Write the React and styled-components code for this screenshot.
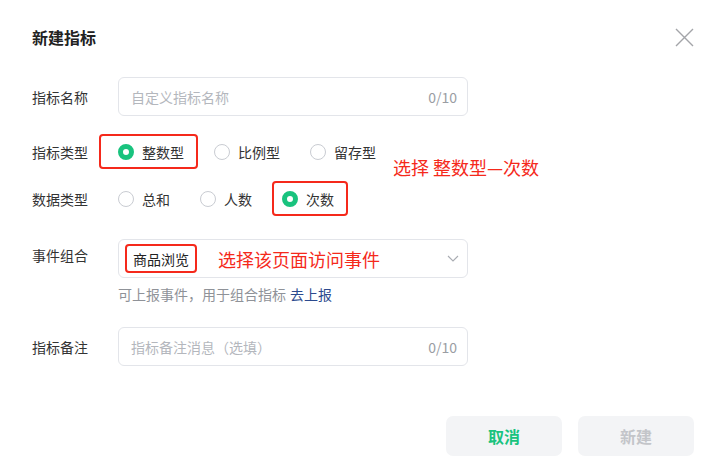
import React from 'react';
import styled, { createGlobalStyle } from 'styled-components';

const GlobalStyle = createGlobalStyle`
  html, body {
    margin: 0;
    padding: 0;
    background: #ffffff;
  }

  body {
    font-family: "Noto Sans CJK SC", "Noto Sans", sans-serif;
    color: #333333;
  }
`;

const ANNOT = '#f5291b';
const GREEN = '#19c37e';

const Dialog = styled.div`
  position: relative;
  box-sizing: border-box;
  width: 719px;
  height: 476px;
  padding: 26px 25px 20px 32px;
`;

const Header = styled.div`
  display: flex;
  justify-content: space-between;
  align-items: center;
  height: 22px;
`;

const Title = styled.h2`
  margin: 0;
  font-size: 16px;
  font-weight: 700;
  line-height: 22px;
  color: #222222;
`;

const Close = styled.button`
  display: flex;
  padding: 0;
  border: none;
  background: none;
  cursor: pointer;
`;

const Form = styled.div`
  display: flex;
  flex-direction: column;
  margin-top: 29px;
`;

const Item = styled.div`
  display: flex;
  align-items: ${props => props.top ? 'flex-start' : 'center'};
  margin-top: ${props => props.gap || 0}px;
`;

const Label = styled.span`
  flex: 0 0 86px;
  font-size: 14px;
  line-height: 20px;
  color: #333333;
  padding-top: ${props => props.offset || 0}px;
`;

const Field = styled.div`
  box-sizing: border-box;
  display: flex;
  align-items: center;
  justify-content: space-between;
  width: 350px;
  height: 39px;
  padding: ${props => props.select ? '0 8px 0 6px' : '0 10px 0 12px'};
  border: 1px solid #e3e5ea;
  border-radius: 6px;
  background: #ffffff;
  font-size: 14px;
`;

const Placeholder = styled.span`
  color: #b4b7bd;
`;

const Counter = styled.span`
  color: #9a9da3;
`;

const RadioGroup = styled.div`
  display: flex;
  gap: 30px;
`;

const Option = styled.label`
  position: relative;
  display: flex;
  align-items: center;
  gap: 8px;
  height: 35px;
  font-size: 14px;
  color: #333333;

  &::before {
    content: '';
    display: ${props => props.mark ? 'block' : 'none'};
    position: absolute;
    top: 0;
    bottom: 0;
    left: ${props => props.mark ? -props.mark[0] : 0}px;
    right: ${props => props.mark ? -props.mark[1] : 0}px;
    border: 2px solid ${ANNOT};
    border-radius: 4px;
  }
`;

const Dot = styled.span`
  box-sizing: border-box;
  width: 16px;
  height: 16px;
  border-radius: 50%;
  border: ${props => props.checked ? `5px solid ${GREEN}` : '1px solid #c9ccd2'};
  background: #ffffff;
`;

const Note = styled.span`
  color: ${ANNOT};
  font-size: ${props => props.size}px;
  line-height: 24px;
  white-space: nowrap;
`;

const FloatingNote = styled(Note)`
  position: absolute;
  left: 393px;
  top: 155px;
`;

const SelectValue = styled.div`
  display: flex;
  align-items: center;
  gap: 21px;
`;

const Tag = styled.span`
  box-sizing: border-box;
  display: flex;
  align-items: center;
  height: 29px;
  padding: 0 6px;
  border: 2px solid ${ANNOT};
  border-radius: 4px;
  font-size: 14px;
  color: #222222;
`;

const Help = styled.div`
  margin: 6px 0 0 86px;
  font-size: 14px;
  line-height: 20px;
  color: #8f9298;
`;

const Link = styled.a`
  color: #2c4a8e;
  text-decoration: none;
  margin-left: 4px;
`;

const Footer = styled.div`
  display: flex;
  justify-content: flex-end;
  gap: 16px;
  margin-top: 50px;
`;

const Button = styled.button`
  width: 116px;
  height: 40px;
  border: none;
  border-radius: 7px;
  background: #f3f4f6;
  font-family: inherit;
  font-size: 16px;
  font-weight: 700;
  color: ${props => props.disabled ? '#c3c5c9' : GREEN};
  cursor: ${props => props.disabled ? 'default' : 'pointer'};
`;

const Radio = ({ label, checked, mark }) => (
  <Option mark={mark}>
    <Dot checked={checked} />
    {label}
  </Option>
);

export default function App() {
  return (
    <>
      <GlobalStyle />
      <Dialog>
        <Header>
          <Title>新建指标</Title>
          <Close aria-label="close">
            <svg width="19" height="19" viewBox="0 0 19 19">
              <path d="M1 1L18 18M18 1L1 18" stroke="#a3a5a9" strokeWidth="1.4" fill="none" />
            </svg>
          </Close>
        </Header>

        <Form>
          <Item>
            <Label>指标名称</Label>
            <Field>
              <Placeholder>自定义指标名称</Placeholder>
              <Counter>0/10</Counter>
            </Field>
          </Item>

          <Item gap={18}>
            <Label>指标类型</Label>
            <RadioGroup>
              <Radio label="整数型" checked mark={[19, 14]} />
              <Radio label="比例型" />
              <Radio label="留存型" />
            </RadioGroup>
          </Item>

          <Item gap={12}>
            <Label>数据类型</Label>
            <RadioGroup>
              <Radio label="总和" />
              <Radio label="人数" />
              <Radio label="次数" checked mark={[10, 14]} />
            </RadioGroup>
          </Item>

          <Item gap={23} top>
            <Label offset={6}>事件组合</Label>
            <Field select>
              <SelectValue>
                <Tag>商品浏览</Tag>
                <Note size={18}>选择该页面访问事件</Note>
              </SelectValue>
              <svg width="12" height="7" viewBox="0 0 12 7">
                <path d="M1 1L6 6L11 1" stroke="#a9acb2" strokeWidth="1.1" fill="none" />
              </svg>
            </Field>
          </Item>
          <Help>
            可上报事件，用于组合指标<Link>去上报</Link>
          </Help>

          <Item gap={23}>
            <Label>指标备注</Label>
            <Field>
              <Placeholder>指标备注消息（选填）</Placeholder>
              <Counter>0/10</Counter>
            </Field>
          </Item>
        </Form>

        <Footer>
          <Button>取消</Button>
          <Button disabled>新建</Button>
        </Footer>

        <FloatingNote size={18}>选择 整数型—次数</FloatingNote>
      </Dialog>
    </>
  );
}
